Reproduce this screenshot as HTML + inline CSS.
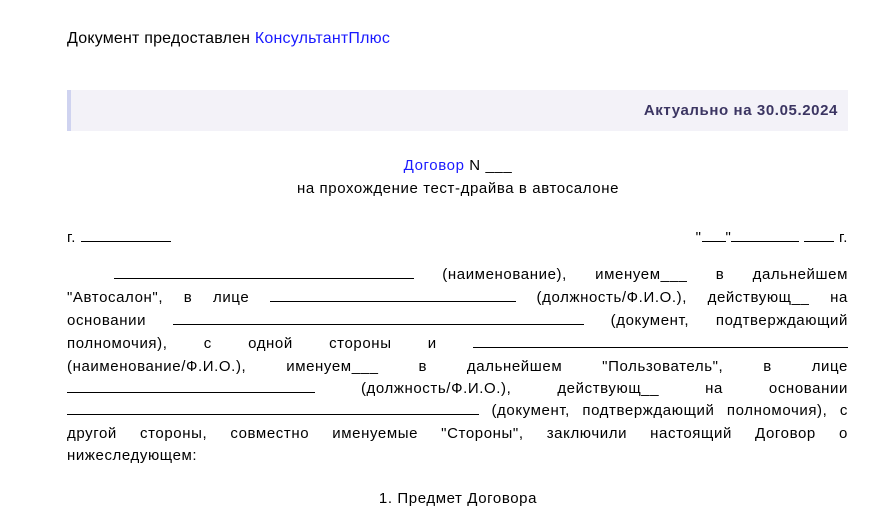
<!DOCTYPE html>
<html><head><meta charset="utf-8"><style>
html,body{margin:0;padding:0;background:#fff;width:896px;height:507px;overflow:hidden}
body{font-family:"Liberation Sans","DejaVu Sans",sans-serif;color:#000;position:relative}
.a{position:absolute;white-space:nowrap}
.l{position:absolute;left:67px;width:781px;display:flex;justify-content:space-between;align-items:baseline;font-size:15px;letter-spacing:0.6px;height:20px;white-space:nowrap}
.u{display:inline-block;border-bottom:1px solid #000;height:12px}
.b{font-size:15px;letter-spacing:0.6px}
</style></head><body>
<div class="a" style="left:67px;top:30px;font-size:16px;letter-spacing:0.2px">Документ предоставлен <span style="color:#1a1aff">КонсультантПлюс</span></div>
<div class="a" style="left:67px;top:90px;width:777px;height:41px;background:#f3f2f8;border-left:4px solid #cfd3f0"></div>
<div class="a" style="right:58px;top:102px;font-size:15px;letter-spacing:0.6px;font-weight:bold;color:#3b3562">Актуально на 30.05.2024</div>
<div class="a b" style="left:0;width:916px;text-align:center;top:157px"><span style="color:#1a1aff">Договор</span> N ___</div>
<div class="a b" style="left:0;width:916px;text-align:center;top:180px">на прохождение тест-драйва в автосалоне</div>
<div class="a b" style="left:67px;top:229px">г. <span class="u" style="width:90px"></span></div>
<div class="a b" style="right:48px;top:229px">"<span class="u" style="width:24px"></span>"<span class="u" style="width:68px"></span> <span class="u" style="width:30px"></span> г.</div>

<div class="l" style="top:266px;left:114px;width:734px"><span class="u" style="width:300px"></span><span>(наименование),</span><span>именуем___</span><span>в</span><span>дальнейшем</span></div>
<div class="l" style="top:289px"><span>"Автосалон",</span><span>в</span><span>лице</span><span class="u" style="width:246px"></span><span>(должность/Ф.И.О.),</span><span>действующ__</span><span>на</span></div>
<div class="l" style="top:312px"><span>основании</span><span class="u" style="width:411px"></span><span>(документ,</span><span>подтверждающий</span></div>
<div class="l" style="top:335px"><span>полномочия),</span><span>с</span><span>одной</span><span>стороны</span><span>и</span><span class="u" style="width:375px"></span></div>
<div class="l" style="top:358px"><span>(наименование/Ф.И.О.),</span><span>именуем___</span><span>в</span><span>дальнейшем</span><span>"Пользователь",</span><span>в</span><span>лице</span></div>
<div class="l" style="top:380px"><span class="u" style="width:248px"></span><span>(должность/Ф.И.О.),</span><span>действующ__</span><span>на</span><span>основании</span></div>
<div class="l" style="top:402px"><span class="u" style="width:412px"></span><span>(документ,</span><span>подтверждающий</span><span>полномочия),</span><span>с</span></div>
<div class="l" style="top:425px"><span>другой</span><span>стороны,</span><span>совместно</span><span>именуемые</span><span>"Стороны",</span><span>заключили</span><span>настоящий</span><span>Договор</span><span>о</span></div>
<div class="a b" style="left:67px;top:447px">нижеследующем:</div>
<div class="a b" style="left:0;width:916px;text-align:center;top:490px">1. Предмет Договора</div>
</body></html>
